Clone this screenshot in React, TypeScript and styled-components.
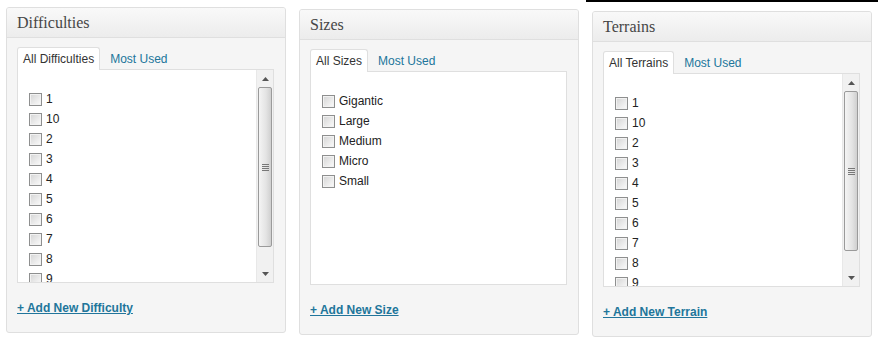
import React from "react";
import styled, { createGlobalStyle } from "styled-components";

const Global = createGlobalStyle`
  html, body { margin: 0; padding: 0; background: #fff; }
  body { font-family: "Liberation Sans", Arial, sans-serif; font-size: 12px; color: #333; }
`;

const Row = styled.div`
  display: flex;
  width: 878px;
`;

const Column = styled.div<{ $top: number; $rule?: boolean }>`
  width: 293px;
  flex: 0 0 293px;
  box-sizing: border-box;
  padding: ${(p) => p.$top}px 0 0 6px;
  border-top: ${(p) => (p.$rule ? "2px solid #000" : "none")};
`;

const Panel = styled.div`
  width: 280px;
  height: 326px;
  box-sizing: border-box;
  background: #f5f5f5;
  border: 1px solid #dfdfdf;
  border-radius: 3px;
  display: flex;
  flex-direction: column;
  overflow: hidden;
`;

const Header = styled.div`
  height: 30px;
  box-sizing: border-box;
  border-bottom: 1px solid #dfdfdf;
  background: linear-gradient(to bottom, #f9f9f9, #ececec);
  padding: 1px 10px 0;
  display: flex;
  align-items: center;
  font-family: Georgia, "Liberation Serif", serif;
  font-size: 16px;
  color: #464646;
`;

const Body = styled.div`
  padding: 8px 11px 0 10px;
  display: flex;
  flex-direction: column;
`;

const Tabs = styled.div`
  display: flex;
  align-items: flex-end;
  height: 23px;
  gap: 4px;
`;

const Tab = styled.div<{ $active?: boolean }>`
  height: 23px;
  box-sizing: border-box;
  padding: 0 5px;
  display: flex;
  align-items: center;
  font-size: 12px;
  color: ${(p) => (p.$active ? "#333" : "#21759b")};
  background: ${(p) => (p.$active ? "#fff" : "transparent")};
  border: 1px solid ${(p) => (p.$active ? "#dfdfdf" : "transparent")};
  border-bottom: none;
  border-radius: 3px 3px 0 0;
  margin-bottom: -1px;
  position: relative;
  z-index: 1;
`;

const Box = styled.div`
  height: 214px;
  box-sizing: border-box;
  border: 1px solid #dfdfdf;
  background: #fff;
  display: flex;
`;

const List = styled.ul`
  list-style: none;
  margin: 0;
  padding: 19px 0 0 11px;
  flex: 1;
  overflow: hidden;
`;

const Item = styled.li`
  height: 20px;
  display: flex;
  align-items: center;
  gap: 4px;
  font-size: 12px;
  color: #222;
`;

const Check = styled.span`
  width: 13px;
  height: 13px;
  box-sizing: border-box;
  border: 1px solid #8e8f8f;
  background: linear-gradient(135deg, #d4d4d4 0%, #eeeeee 65%, #fbfbfb 100%);
  box-shadow: inset 0 0 0 1px #f2f2f2;
  flex: 0 0 13px;
`;

const Scrollbar = styled.div`
  width: 16px;
  flex: 0 0 16px;
  background: #f1f1f1;
  border-left: 1px solid #e8e8e8;
  display: flex;
  flex-direction: column;
  align-items: center;
`;

const Arrow = styled.div`
  height: 17px;
  width: 16px;
  display: flex;
  align-items: center;
  justify-content: center;
`;

const Thumb = styled.div`
  width: 14px;
  height: 160px;
  box-sizing: border-box;
  border: 1px solid #9a9a9a;
  border-radius: 2px;
  background: linear-gradient(to right, #f4f4f4, #e3e3e3 60%, #cfcfcf);
  display: flex;
  align-items: center;
  justify-content: center;
`;

const Grip = styled.div`
  width: 7px;
  height: 7px;
  background: repeating-linear-gradient(to bottom, #777 0 1px, transparent 1px 2px);
`;

const Spacer = styled.div`
  flex: 1;
`;

const Footer = styled.div`
  padding: 18px 0 0 0;
`;

const AddLink = styled.a`
  font-weight: bold;
  font-size: 12px;
  color: #21759b;
  text-decoration: underline;
`;

const Up = () => (
  <svg width="7" height="4" viewBox="0 0 7 4"><path d="M3.5 0 L7 4 L0 4 Z" fill="#555" /></svg>
);
const Down = () => (
  <svg width="7" height="4" viewBox="0 0 7 4"><path d="M0 0 L7 0 L3.5 4 Z" fill="#555" /></svg>
);

type BoxProps = {
  title: string;
  allLabel: string;
  items: string[];
  addLabel: string;
  scroll?: boolean;
  top: number;
  rule?: boolean;
};

const TaxBox = ({ title, allLabel, items, addLabel, scroll, top, rule }: BoxProps) => (
  <Column $top={top} $rule={rule}>
    <Panel>
      <Header>{title}</Header>
      <Body>
        <Tabs>
          <Tab $active>{allLabel}</Tab>
          <Tab>Most Used</Tab>
        </Tabs>
        <Box>
          <List>
            {items.map((it) => (
              <Item key={it}>
                <Check />
                {it}
              </Item>
            ))}
          </List>
          {scroll && (
            <Scrollbar>
              <Arrow><Up /></Arrow>
              <Thumb><Grip /></Thumb>
              <Spacer />
              <Arrow><Down /></Arrow>
            </Scrollbar>
          )}
        </Box>
        <Footer>
          <AddLink href="#">{addLabel}</AddLink>
        </Footer>
      </Body>
    </Panel>
  </Column>
);

const nums = ["1", "10", "2", "3", "4", "5", "6", "7", "8", "9"];

export default function App() {
  return (
    <>
      <Global />
      <Row>
        <TaxBox top={7} title="Difficulties" allLabel="All Difficulties" items={nums} addLabel="+ Add New Difficulty" scroll />
        <TaxBox top={9} title="Sizes" allLabel="All Sizes" items={["Gigantic", "Large", "Medium", "Micro", "Small"]} addLabel="+ Add New Size" />
        <TaxBox top={9} rule title="Terrains" allLabel="All Terrains" items={nums} addLabel="+ Add New Terrain" scroll />
      </Row>
    </>
  );
}
